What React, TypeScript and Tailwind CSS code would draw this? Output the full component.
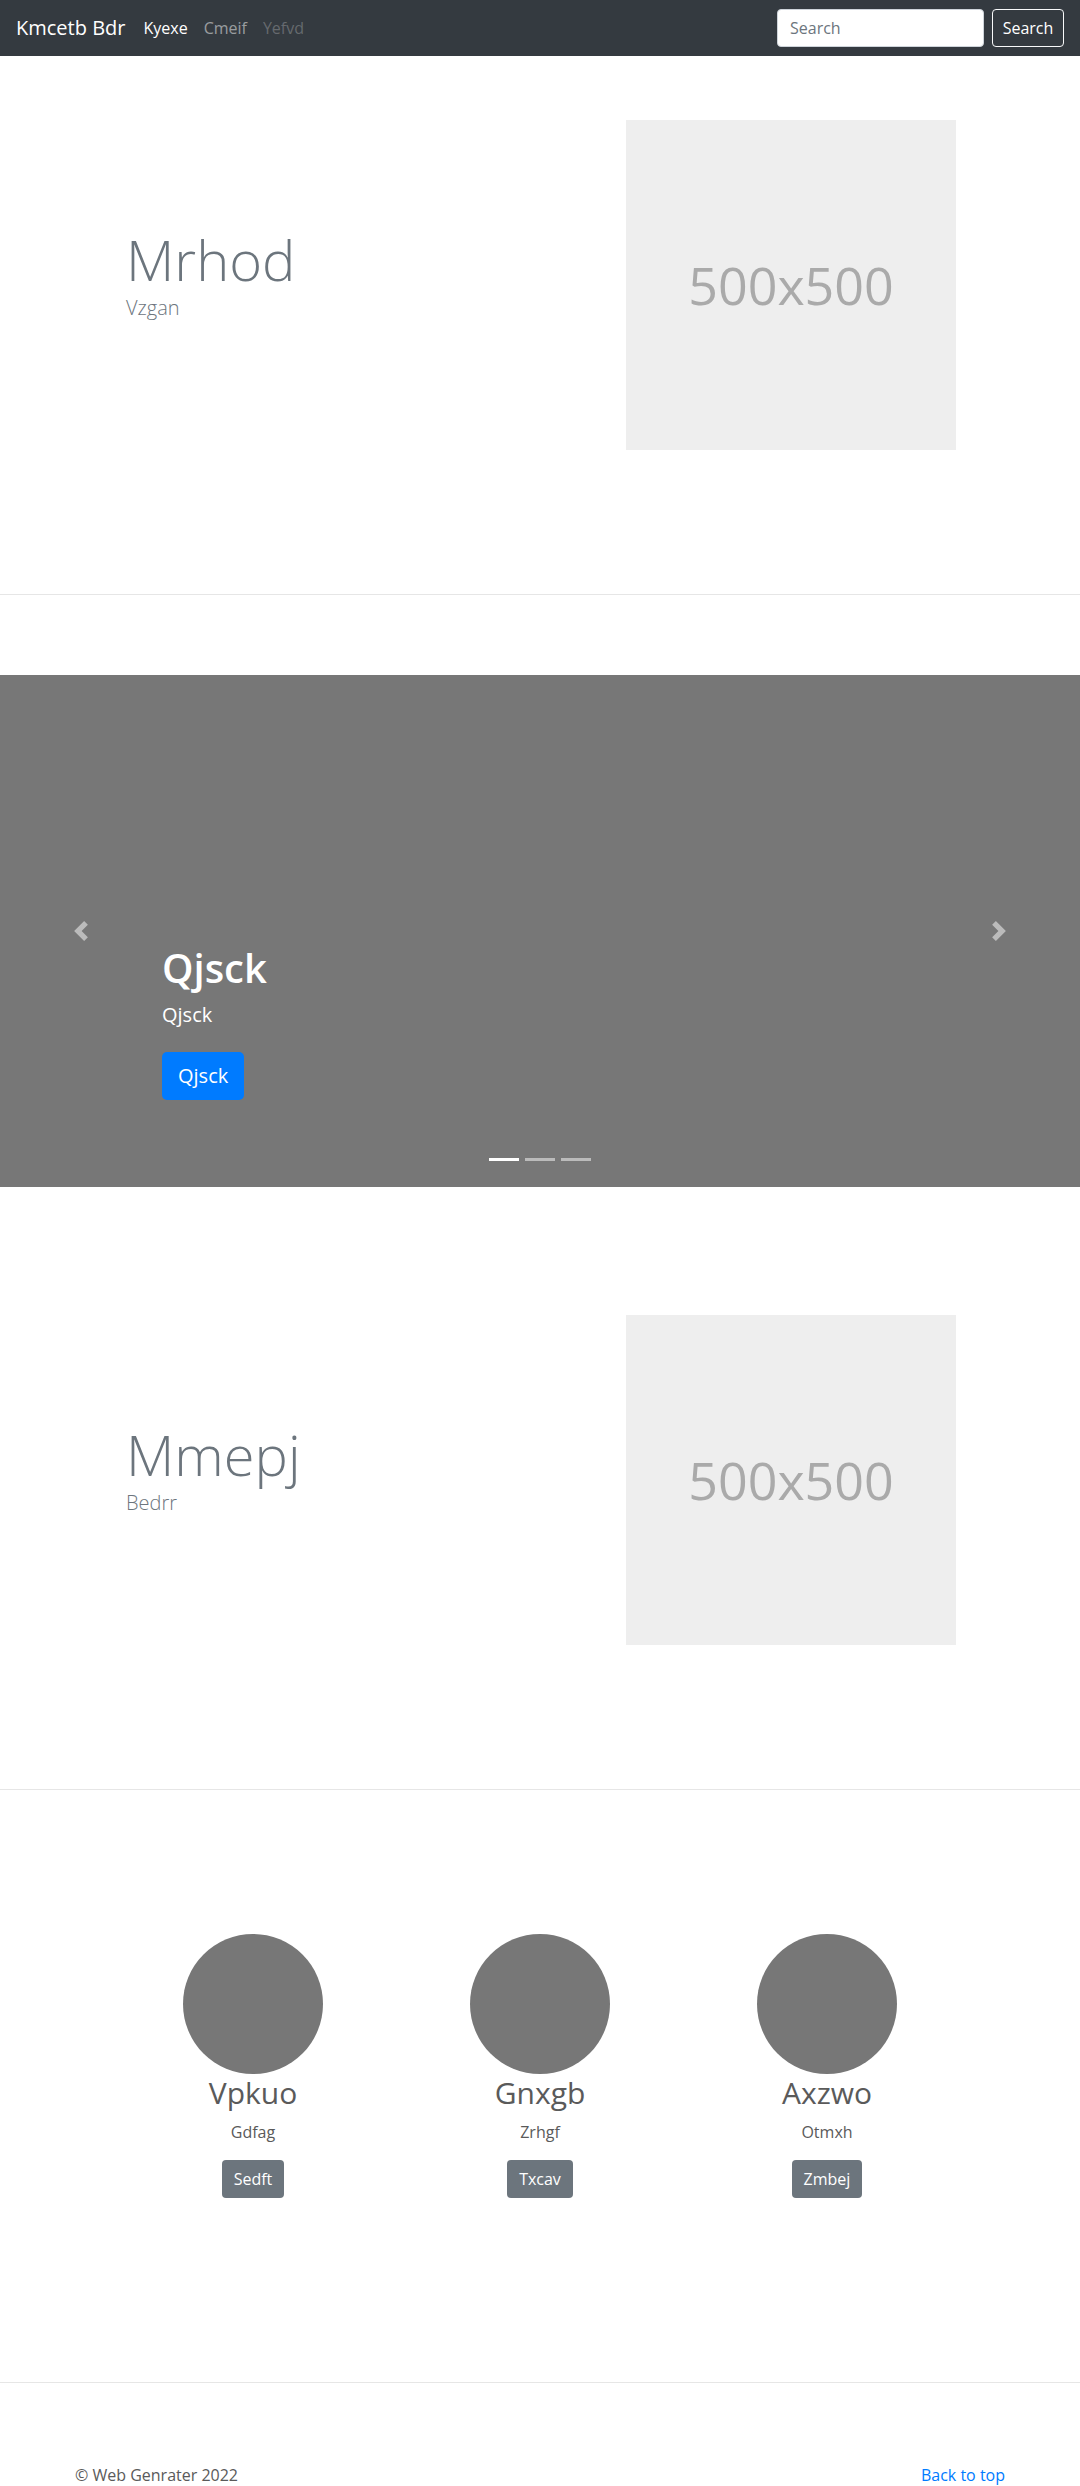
const navLinks = [
  { label: "Kyexe", cls: "text-white" },
  { label: "Cmeif", cls: "text-white/50" },
  { label: "Yefvd", cls: "text-white/25" },
];

const people = [
  { name: "Vpkuo", sub: "Gdfag", btn: "Sedft" },
  { name: "Gnxgb", sub: "Zrhgf", btn: "Txcav" },
  { name: "Axzwo", sub: "Otmxh", btn: "Zmbej" },
];

function Chevron({ flip }: { flip?: boolean }) {
  return (
    <svg
      viewBox="0 0 8 8"
      className={`h-5 w-5 ${flip ? "rotate-180" : ""}`}
      fill="#fff"
      aria-hidden
    >
      <path d="M5.25 0l-4 4 4 4 1.5-1.5L4.25 4l2.5-2.5L5.25 0z" />
    </svg>
  );
}

function Featurette({ title, lead }: { title: string; lead: string }) {
  return (
    <section className="flex items-center py-16 pl-[126px]">
      <div className="flex-1 pb-[22px]">
        <h1 className="text-[56px] font-light leading-[68px] text-[#6c757d]">
          {title}
        </h1>
        <p className="text-[20px] font-light leading-[30px] text-[#6c757d]">
          {lead}
        </p>
      </div>
      <div className="mr-[124px] flex h-[330px] w-[330px] items-center justify-center bg-[#eee]">
        <span className="text-[52px] text-[#aaa]">500x500</span>
      </div>
    </section>
  );
}

export default function App() {
  return (
    <div className="min-h-[2486px] bg-white font-['Segoe_UI','Open_Sans',sans-serif] text-[16px] leading-6 text-[#5a5a5a]">
      <nav className="flex h-14 items-center bg-[#343a40] px-4">
        <span className="mr-[10px] text-[20px] text-white">Kmcetb Bdr</span>
        <ul className="flex">
          {navLinks.map((l) => (
            <li key={l.label} className={`px-2 ${l.cls}`}>
              {l.label}
            </li>
          ))}
        </ul>
        <div className="ml-auto flex items-center gap-2">
          <div className="flex h-[38px] w-[207px] items-center rounded border border-[#ced4da] bg-white px-3 text-[#6c757d]">
            Search
          </div>
          <button className="h-[38px] w-[72px] rounded border border-[#f8f9fa] text-white">
            Search
          </button>
        </div>
      </nav>

      <Featurette title="Mrhod" lead="Vzgan" />

      <hr className="my-20 border-[#e6e6e6]" />

      <div className="relative mb-16 h-[512px] bg-[#777]">
        <div className="absolute inset-y-0 left-0 flex w-[162px] items-center justify-center opacity-50">
          <Chevron />
        </div>
        <div className="absolute inset-y-0 right-0 flex w-[162px] items-center justify-center opacity-50">
          <Chevron flip />
        </div>
        <div className="absolute bottom-[87px] left-[162px] text-white">
          <h1 className="mb-2 text-[40px] font-semibold leading-[48px]">Qjsck</h1>
          <p className="mb-[22px] text-[20px] leading-[30px]">Qjsck</p>
          <button className="h-12 rounded-[5px] bg-[#007bff] px-4 text-[20px] text-white">
            Qjsck
          </button>
        </div>
        <div className="absolute bottom-[26px] left-0 right-0 flex justify-center gap-[6px]">
          <span className="h-[3px] w-[30px] bg-white" />
          <span className="h-[3px] w-[30px] bg-white/50" />
          <span className="h-[3px] w-[30px] bg-white/50" />
        </div>
      </div>

      <Featurette title="Mmepj" lead="Bedrr" />

      <hr className="my-20 border-[#e6e6e6]" />

      <section className="mx-auto grid w-[861px] grid-cols-3 pt-16 pb-[104px] text-center">
        {people.map((p) => (
          <div key={p.name} className="flex flex-col items-center">
            <div className="h-[140px] w-[140px] rounded-full bg-[#777]" />
            <h2 className="mb-2 text-[30px] leading-[38px]">{p.name}</h2>
            <p className="mb-4">{p.sub}</p>
            <button className="h-[38px] rounded bg-[#6c757d] px-3 text-white">
              {p.btn}
            </button>
          </div>
        ))}
      </section>

      <hr className="mt-20 border-[#e6e6e6]" />

      <footer className="mx-auto mt-20 flex w-[930px] justify-between">
        <p>© Web Genrater 2022</p>
        <a href="#" className="text-[#007bff]">
          Back to top
        </a>
      </footer>
    </div>
  );
}
